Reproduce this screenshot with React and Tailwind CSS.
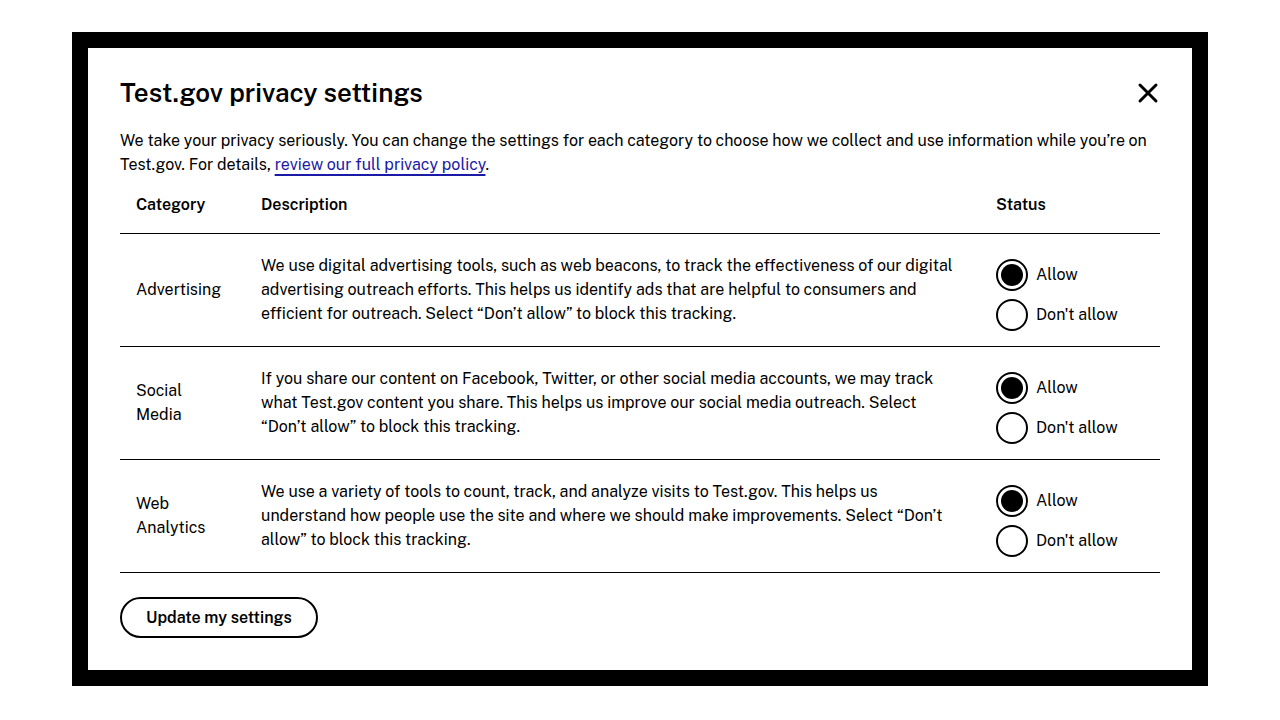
import { X } from 'lucide-react'

const rows = [
  {
    category: 'Advertising',
    description:
      'We use digital advertising tools, such as web beacons, to track the effectiveness of our digital advertising outreach efforts. This helps us identify ads that are helpful to consumers and efficient for outreach. Select “Don’t allow” to block this tracking.',
  },
  {
    category: 'Social Media',
    description:
      'If you share our content on Facebook, Twitter, or other social media accounts, we may track what Test.gov content you share. This helps us improve our social media outreach. Select “Don’t allow” to block this tracking.',
  },
  {
    category: 'Web Analytics',
    description:
      'We use a variety of tools to count, track, and analyze visits to Test.gov. This helps us understand how people use the site and where we should make improvements. Select “Don’t allow” to block this tracking.',
  },
]

function Radio({ checked, label }) {
  return (
    <label className="flex items-center gap-2 h-8">
      <span className="w-8 h-8 rounded-full border-2 border-black flex items-center justify-center bg-white">
        {checked && <span className="w-[22px] h-[22px] rounded-full bg-black" />}
      </span>
      <span>{label}</span>
    </label>
  )
}

export default function App() {
  return (
    <div
      className="bg-white min-h-[720px] px-[72px] pt-8 text-black text-[16px] leading-6"
      style={{ fontFamily: '"Public Sans", Inter, "Liberation Sans", sans-serif' }}
    >
      <div className="border-[16px] border-black bg-white px-8 pt-[29px] pb-8">
        {/* HEADER */}
        <div className="flex items-center justify-between">
          <h1 className="text-[26px] leading-8 font-semibold">Test.gov privacy settings</h1>
          <X className="w-8 h-8 -mr-1" strokeWidth={2.2} />
        </div>

        <p className="mt-5">
          We take your privacy seriously. You can change the settings for each category to choose how we collect and use information while you’re on Test.gov. For details,{' '}
          <a href="#" className="text-[#1a1aa6] underline underline-offset-[4px] decoration-2">
            review our full privacy policy
          </a>
          .
        </p>

        {/* TABLE */}
        <table className="w-full mt-1 border-collapse">
          <thead>
            <tr className="border-b border-black">
              <th className="text-left font-semibold px-4 pt-3 pb-4 w-[125px]">Category</th>
              <th className="text-left font-semibold px-4 pt-3 pb-4">Description</th>
              <th className="text-left font-semibold px-4 pt-3 pb-4 w-[180px]">Status</th>
            </tr>
          </thead>
          <tbody>
            {rows.map((row) => (
              <tr key={row.category} className="border-b border-black">
                <td className="px-4 py-5 align-middle">{row.category}</td>
                <td className="px-4 py-5 align-middle">{row.description}</td>
                <td className="px-4 py-5 align-middle">
                  <div className="flex flex-col gap-2 mt-[5px] -mb-[5px]">
                    <Radio checked label="Allow" />
                    <Radio label="Don't allow" />
                  </div>
                </td>
              </tr>
            ))}
          </tbody>
        </table>

        <button className="mt-6 h-[41px] px-6 rounded-full border-2 border-black font-semibold bg-white">
          Update my settings
        </button>
      </div>
    </div>
  )
}
